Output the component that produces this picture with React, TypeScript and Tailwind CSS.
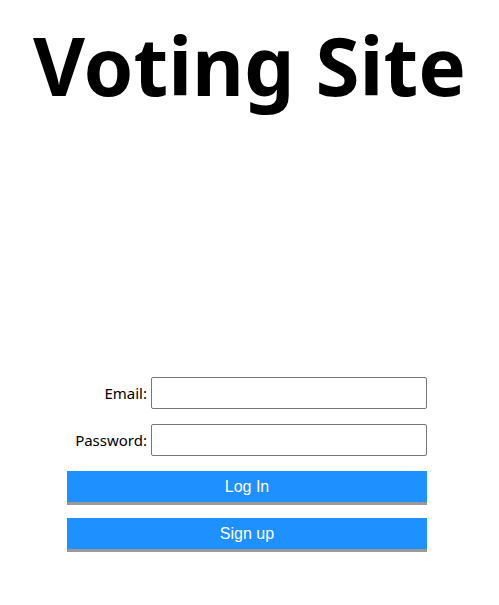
import React from 'react';

export default function App() {
  return (
    <div className="min-h-screen bg-white text-black">
      <h1
        className="text-center font-bold text-[80px] leading-none pt-[25px] m-0"
        style={{ fontFamily: '"Noto Sans", sans-serif' }}
      >
        Voting Site
      </h1>

      <form className="w-[360px] ml-[67px] mt-[272px] flex flex-col">
        <div className="flex items-center" style={{ fontFamily: '"Noto Sans", sans-serif' }}>
          <label className="w-[84px] pr-[4px] text-right text-[15px]">Email:</label>
          <input type="email" className="w-[276px] h-[32px] border border-[#767676] rounded-[2px] px-1" />
        </div>
        <div className="flex items-center mt-[15px]" style={{ fontFamily: '"Noto Sans", sans-serif' }}>
          <label className="w-[84px] pr-[4px] text-right text-[15px]">Password:</label>
          <input type="password" className="w-[276px] h-[32px] border border-[#767676] rounded-[2px] px-1" />
        </div>
        <button
          type="button"
          className="mt-[15px] h-[34px] bg-[#1e90ff] text-white text-[16px] border-b-[3px] border-[#999999]"
          style={{ fontFamily: '"Liberation Sans", Arial, sans-serif' }}
        >
          Log In
        </button>
        <button
          type="button"
          className="mt-[13px] h-[34px] bg-[#1e90ff] text-white text-[16px] border-b-[3px] border-[#999999]"
          style={{ fontFamily: '"Liberation Sans", Arial, sans-serif' }}
        >
          Sign up
        </button>
      </form>
    </div>
  );
}
